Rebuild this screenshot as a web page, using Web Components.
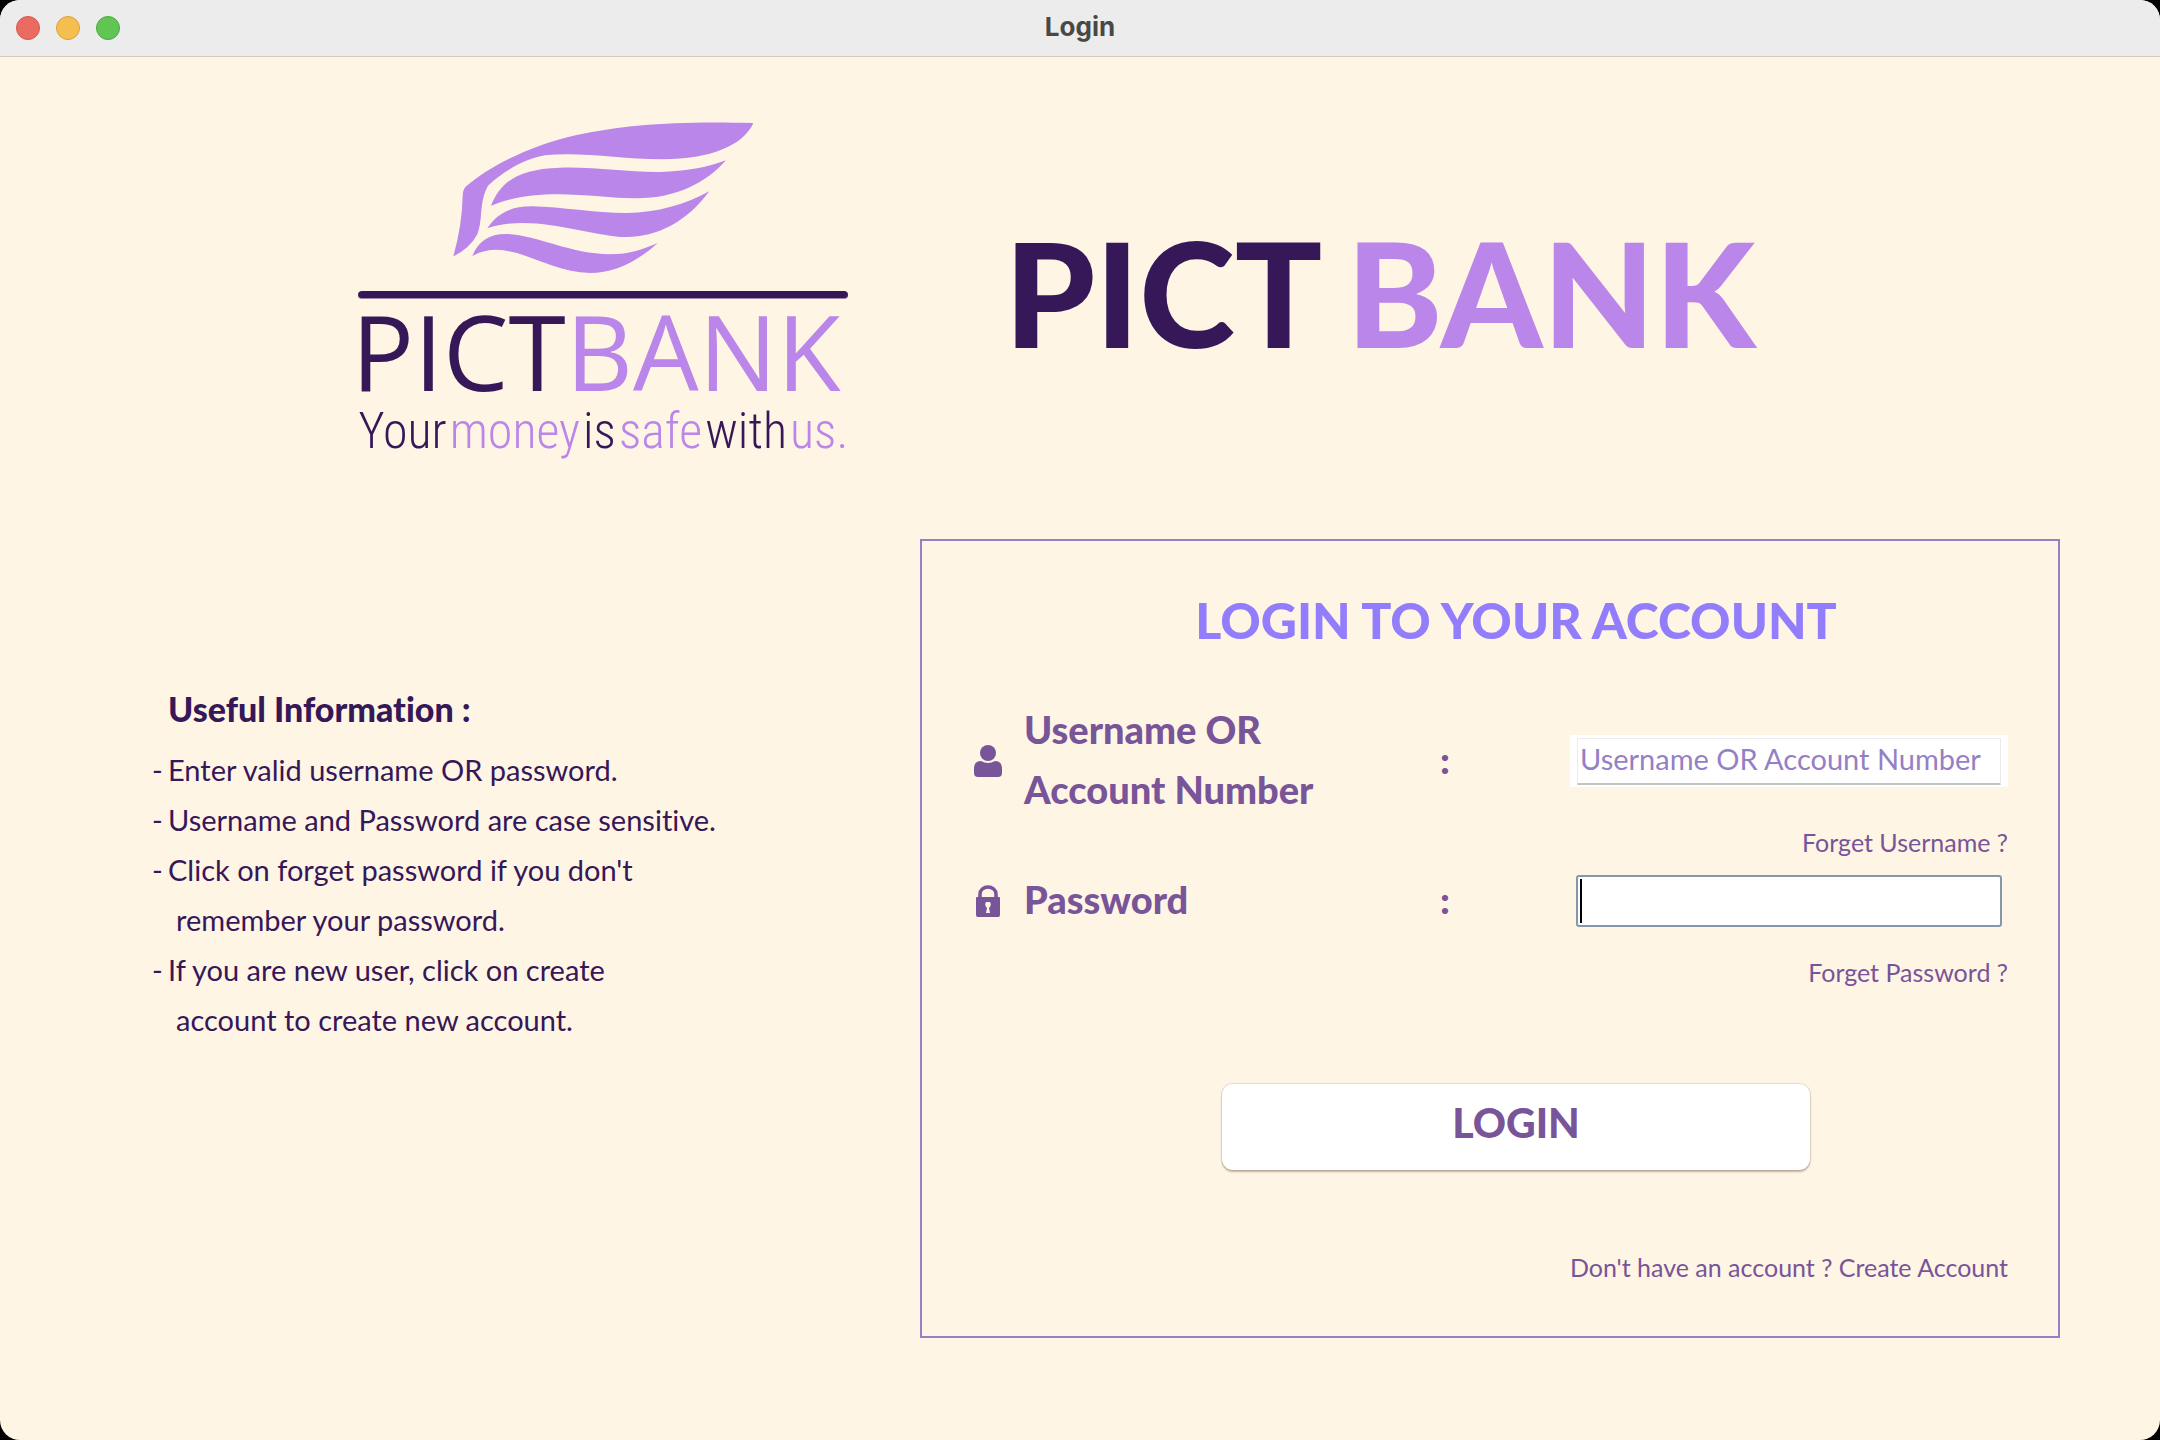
<!DOCTYPE html>
<html lang="en">
<head>
<meta charset="utf-8">
<title>Login</title>
<style>
  html { background: #000; }
  body { margin: 0; font-family: Lato, "Open Sans", sans-serif; font-variant-ligatures: none; color: #361758; }
</style>
</head>
<body>
<bank-window>
  <window-titlebar slot="bar">Login</window-titlebar>
  <bank-logo slot="header"></bank-logo>
  <brand-title slot="header"></brand-title>
  <info-list slot="info"></info-list>
  <login-panel slot="panel"></login-panel>
</bank-window>

<script>
function define(name, html, setup) {
  const template = document.createElement('template');
  template.innerHTML = html;
  customElements.define(name, class extends HTMLElement {
    constructor() {
      super();
      this.attachShadow({ mode: 'open' }).append(template.content.cloneNode(true));
    }
    connectedCallback() { if (setup) setup(this, this.shadowRoot); }
  });
}

define('bank-window', `
<style>
  :host { display: flex; flex-direction: column; min-height: 100vh; background: #fff5e4; border-radius: 20px; overflow: hidden; }
  main { display: flex; flex-direction: column; gap: 80px; padding: 62px 100px 60px; }
  header { display: flex; justify-content: center; align-items: center; gap: 156px; padding-right: 46px; }
  .body { display: grid; grid-template-columns: 820fr 1140fr; align-items: start; }
</style>
<slot name="bar"></slot>
<main>
  <header><slot name="header"></slot></header>
  <div class="body"><slot name="info"></slot><slot name="panel"></slot></div>
</main>`);

define('window-titlebar', `
<style>
  :host { display: grid; grid-template-columns: 1fr auto 1fr; align-items: center; height: 56px; padding: 0 16px; background: #ececec; border-bottom: 1px solid #d3c9ba; font: 700 26px/54px Inter, sans-serif; color: #484848; }
  .lights { display: flex; gap: 16px; }
  .title { padding-bottom: 2px; }
  button { width: 24px; height: 24px; padding: 0; border-radius: 50%; border: 1px solid; }
  .close { background: #ec6b60; border-color: #d5564c; }
  .min { background: #f5bf4f; border-color: #d9a13c; }
  .max { background: #61c554; border-color: #4ba93e; }
</style>
<div class="lights">
  <button class="close" aria-label="Close"></button>
  <button class="min" aria-label="Minimize"></button>
  <button class="max" aria-label="Zoom"></button>
</div>
<div class="title"><slot></slot></div>`);

define('bank-logo', `
<style>
  :host { display: flex; flex-direction: column; width: 490px; color: #361758; }
  svg { width: 307px; height: 157px; margin: 0 0 15px 92px; fill: #bb86e9; }
  .bar { height: 7px; border-radius: 4px; background: #361758; border-bottom: 1px solid #9a87a2; }
  .name { font: 400 104px/104px "Open Sans", sans-serif; white-space: nowrap; margin-left: -7px; }
  .tag { display: flex; justify-content: space-between; font: 300 50px/56px "Roboto Condensed", "Liberation Sans Narrow", Roboto, sans-serif; }
  b { font-weight: inherit; color: #bb86e9; }
</style>
<svg viewBox="320 60 921 471" aria-hidden="true">
  <path d="M1230 72C1000 66 850 76 700 108C560 140 440 200 366 264Q358 274 358 292Q356 380 330 472Q380 448 402 406C420 360 406 310 434 260C490 210 545 180 605 169C720 158 840 182 960 181C1100 180 1200 140 1230 72Z"/>
  <path d="M443 320C470 255 515 210 650 206C760 203 850 220 950 219C1030 217 1090 206 1148 184C1090 250 1000 298 880 298C770 300 590 258 443 320Z"/>
  <path d="M432 388C460 345 500 322 565 322C660 324 750 342 850 342C940 342 1030 315 1098 277C1030 370 940 414 850 414C740 414 570 340 432 388Z"/>
  <path d="M387 471C405 425 440 404 490 405C580 408 680 465 800 466C860 466 900 450 943 432C880 490 810 522 740 522C600 520 500 410 387 471Z"/>
</svg>
<div class="bar"></div>
<div class="name">PICT<b>BANK</b></div>
<div class="tag"><span>Your</span><b>money</b><span>is</span><b>safe</b><span>with</span><b>us.</b></div>`);

define('brand-title', `
<style>
  :host { display: block; padding-top: 6px; }
  h1 { margin: 0; display: flex; gap: 24px; font-size: 145px; line-height: 170px; font-weight: 900; color: #361758; }
  b { font-weight: inherit; color: #bb86e9; }
</style>
<h1><span>PICT</span><b>BANK</b></h1>`);

define('info-list', `
<style>
  :host { display: block; padding: 145px 0 0 52px; color: #361758; }
  h2 { margin: 0; padding-left: 16px; font-size: 34px; line-height: 50px; font-weight: 900; }
  ul { margin: 11px 0 0; padding: 0; list-style: none; font-size: 29px; line-height: 50px; }
  li { display: grid; grid-template-columns: 16px 1fr; }
  .more { display: block; padding-left: 8px; }
</style>
<h2>Useful Information :</h2>
<ul>
  <li><span>-</span><span>Enter valid username OR password.</span></li>
  <li><span>-</span><span>Username and Password are case sensitive.</span></li>
  <li><span>-</span><span>Click on forget password if you don't <span class="more">remember your password.</span></span></li>
  <li><span>-</span><span>If you are new user, click on create <span class="more">account to create new account.</span></span></li>
</ul>`);

define('user-icon', `
<style>:host { display: block; } svg { display: block; width: 28px; height: 32px; fill: #785499; }</style>
<svg viewBox="0 0 28 32" aria-hidden="true">
  <circle cx="14" cy="8" r="8"/>
  <path d="M7 16Q14 20 21 16Q28 16 28 24V28Q28 32 24 32H4Q0 32 0 28V24Q0 16 7 16Z"/>
</svg>`);

define('lock-icon', `
<style>:host { display: block; } svg { display: block; width: 28px; height: 32px; }</style>
<svg viewBox="0 0 28 32" aria-hidden="true">
  <path d="M6 14V9a8 7 0 0 1 16 0V14" fill="none" stroke="#785499" stroke-width="3.5"/>
  <path fill="#785499" fill-rule="evenodd" d="M3 12H25Q26 12 26 13V30Q26 32 24 32H4Q2 32 2 30V13Q2 12 3 12ZM12 17Q10 20 13 23L12 28H16L15 23Q18 20 16 17Z"/>
</svg>`);

define('form-field', `
<style>
  :host { display: grid; grid-template-columns: 52px 1fr 130px 438px; align-items: center; color: #785499; }
  label, .colon { font-size: 38px; line-height: 60px; font-weight: 900; }
  label { max-width: 320px; }
  .icon { padding: 4px 0 0 2px; }
  .box { box-sizing: border-box; height: 52px; margin-top: 4px; padding: 3px 7px 2px; }
  input { box-sizing: border-box; display: block; width: 100%; height: 100%; margin: 0; padding: 0 2px 6px; outline: none; background: #fff; border: 1px solid #ebebeb; border-bottom: 2px solid #c4c4c4; border-radius: 1px; font: 400 29px/40px Lato, sans-serif; color: #361758; }
  input::placeholder { color: #957fc5; opacity: 1; }
  :host([plain]) .box { background: #fff; }
  :host([active]) .box { padding: 0 6px; }
  :host([active]) input { border: 2px solid #8597ad; border-radius: 3px; background: linear-gradient(#000, #000) 2px center / 2px 44px no-repeat #fff; }
</style>
<div class="icon"><slot></slot></div>
<label for="field"></label>
<span class="colon">:</span>
<div class="box"><input id="field"></div>`, (host, root) => {
  root.querySelector('label').textContent = host.getAttribute('label');
  const input = root.querySelector('input');
  input.type = host.getAttribute('type') || 'text';
  input.placeholder = host.getAttribute('placeholder') || '';
});

define('login-panel', `
<style>
  :host { display: block; box-sizing: border-box; border: 2px solid #957fc5; padding: 49px 50px 42px; }
  form { display: flex; flex-direction: column; }
  h2 { margin: 0 0 49px 52px; text-align: center; font-size: 50px; line-height: 60px; font-weight: 900; color: #927efc; }
  a { align-self: flex-end; margin-bottom: 4px; font-size: 25px; line-height: 46px; color: #785499; text-decoration: none; }
  .forgot-password { margin-top: 20px; }
  .create { margin-top: 74px; }
  .actions { display: flex; justify-content: center; margin: 85px 0 0 52px; }
  button { width: 588px; height: 86px; padding: 0 0 8px; border: 0; border-radius: 11px; background: #fff; box-shadow: 0 0 1px 1px rgba(90, 70, 40, .14), 0 2px 2px rgba(90, 70, 40, .35); font: 900 41px/50px Lato, sans-serif; color: #785499; }
</style>
<form>
  <h2>LOGIN TO YOUR ACCOUNT</h2>
  <form-field plain label="Username OR Account Number" placeholder="Username OR Account Number"><user-icon></user-icon></form-field>
  <a href="#username">Forget Username ?</a>
  <form-field active label="Password" type="password"><lock-icon></lock-icon></form-field>
  <a class="forgot-password" href="#password">Forget Password ?</a>
  <div class="actions"><button type="button">LOGIN</button></div>
  <a class="create" href="#create">Don't have an account ? Create Account</a>
</form>`);
</script>
</body>
</html>
